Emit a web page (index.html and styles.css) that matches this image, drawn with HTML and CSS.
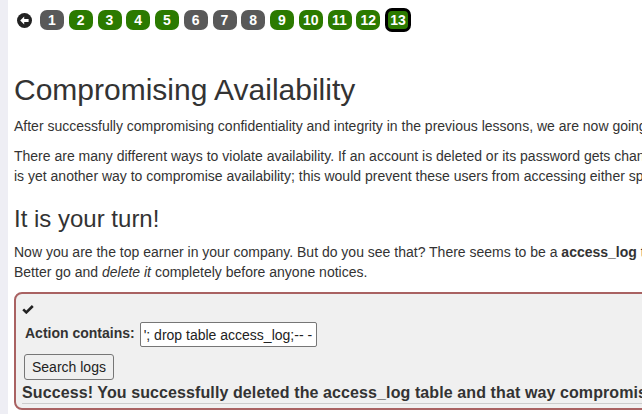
FILE: index.html
```html
<!DOCTYPE html>
<html lang="en">
<head>
<meta charset="utf-8">
<title>Compromising Availability</title>
<link rel="stylesheet" href="styles.css">
</head>
<body>
<div class="layout">
  <div class="sidebar"></div>
  <main class="main">
    <nav class="pager">
      <span class="back">
        <svg width="15" height="15" viewBox="0 0 15 15"><circle cx="7.5" cy="7.5" r="7.5" fill="#222"/><path d="M3.2 7.5 L7.2 3.6 L7.2 6.1 L11.6 6.1 L11.6 8.9 L7.2 8.9 L7.2 11.4 Z" fill="#fff"/></svg>
      </span>
      <span class="badge gray">1</span>
      <span class="badge green">2</span>
      <span class="badge green">3</span>
      <span class="badge green">4</span>
      <span class="badge green">5</span>
      <span class="badge gray">6</span>
      <span class="badge gray">7</span>
      <span class="badge gray">8</span>
      <span class="badge green">9</span>
      <span class="badge green">10</span>
      <span class="badge green">11</span>
      <span class="badge green">12</span>
      <span class="badge green current">13</span>
    </nav>

    <h2 class="title">Compromising Availability</h2>
    <p class="text">After successfully compromising confidentiality and integrity in the previous lessons, we are now going to compromise the third element of the CIA triad: availability.</p>
    <p class="text">There are many different ways to violate availability. If an account is deleted or its password gets changed, the actual owner cannot access this account anymore. Attackers could also try to delete parts of the database, or even drop the whole database, in order to make the data inaccessible. Revoking the access rights of users<br>is yet another way to compromise availability; this would prevent these users from accessing either specific parts of the database or even the entire database as a whole.</p>

    <h3 class="subtitle">It is your turn!</h3>
    <p class="text">Now you are the top earner in your company. But do you see that? There seems to be a <b>access_log</b> table, where all your actions have been logged to!<br>Better go and <i>delete it</i> completely before anyone notices.</p>

    <section class="attack">
      <div class="check">
        <svg width="12" height="9" viewBox="0 0 12 9"><path d="M1.2 4.4 L4.3 7.4 L10.8 1" fill="none" stroke="#222" stroke-width="2.6" stroke-linejoin="miter"/></svg>
      </div>
      <form class="form">
        <div class="row">
          <label class="label" for="action">Action contains:</label>
          <input class="input" id="action" type="text" value="'; drop table access_log;-- -">
        </div>
        <button class="button" type="button">Search logs</button>
      </form>
      <div class="feedback">Success! You successfully deleted the access_log table and that way compromised the availability of the data.</div>
    </section>
  </main>
</div>
</body>
</html>
```

FILE: styles.css
```css
html, body {
  margin: 0;
  padding: 0;
  height: 100%;
  overflow: hidden;
  background: #fff;
}

body {
  font-family: "Liberation Sans", Arial, sans-serif;
  font-size: 14px;
  line-height: 20px;
  color: #333;
}

.layout {
  display: flex;
  min-height: 100%;
}

.sidebar {
  width: 8px;
  flex: none;
  background: #eeeef4;
}

.main {
  flex: none;
  width: 1200px;
  padding-left: 6px;
}

.pager {
  display: flex;
  align-items: center;
  gap: 4.75px;
  padding-top: 8px;
  padding-left: 3px;
  margin-bottom: 41px;
}

.back {
  display: flex;
  width: 15px;
  height: 15px;
  margin-right: 3.25px;
}

.badge {
  box-sizing: border-box;
  width: 24px;
  height: 20px;
  border-radius: 7px;
  color: #fff;
  font-weight: bold;
  font-size: 14px;
  line-height: 20px;
  text-align: center;
}

.green {
  background: #2b7a00;
}

.gray {
  background: #595959;
}

.current {
  width: 26px;
  height: 24px;
  border: 3px solid #000;
  line-height: 18px;
  border-radius: 7px;
}

.title {
  margin: 20px 0 10px;
  font-size: 30px;
  font-weight: normal;
  line-height: 33px;
}

.subtitle {
  margin: 20px 0 10px;
  font-size: 24px;
  font-weight: normal;
  line-height: 26.4px;
}

.text {
  margin: 0 0 10px;
  white-space: nowrap;
}

.attack {
  border: 2px solid #a96262;
  border-radius: 8px;
  background: #f0f0f0;
  padding: 11px 0 4px 6px;
}

.check {
  display: flex;
  height: 9px;
  margin-bottom: 8px;
}

.form {
  margin: 0 0 0 2px;
}

.row {
  display: flex;
  align-items: flex-start;
  height: 25px;
  margin-bottom: 7px;
}

.label {
  font-weight: bold;
  font-size: 14px;
  line-height: 20px;
  padding-top: 1px;
  margin-left: 1px;
  margin-right: 5px;
}

.input {
  box-sizing: border-box;
  width: 177px;
  height: 25px;
  border: 1px solid #767676;
  border-radius: 2px;
  padding: 0 3px;
  font-family: "Liberation Sans", Arial, sans-serif;
  font-size: 14px;
  color: #222;
  background: #fff;
}

.button {
  display: block;
  box-sizing: border-box;
  height: 26px;
  padding: 0 7px;
  border: 1px solid #767676;
  border-radius: 3px;
  background: #efefef;
  font-family: "Liberation Sans", Arial, sans-serif;
  font-size: 14px;
  color: #222;
}

.feedback {
  margin-top: 3px;
  font-weight: bold;
  font-size: 16px;
  line-height: 20px;
  letter-spacing: 0.1px;
  white-space: nowrap;
  border-bottom: 1px solid #cccccc;
}
```
